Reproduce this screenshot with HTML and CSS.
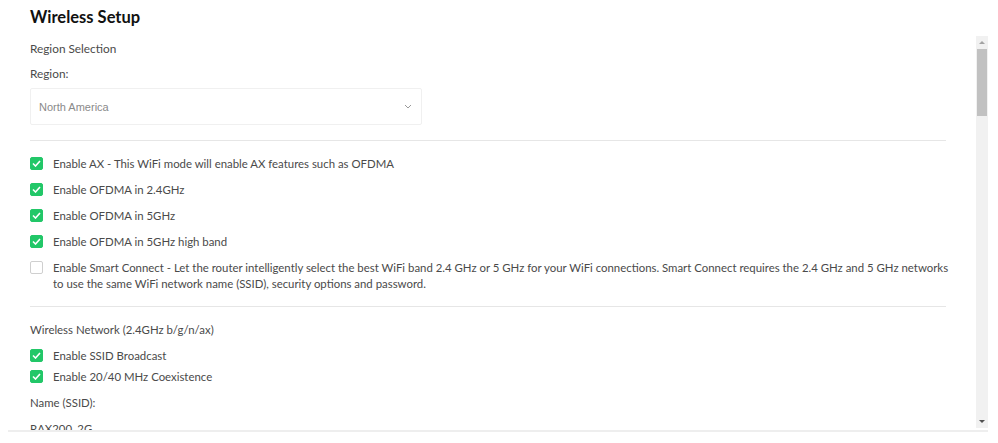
FILE: index.html
```html
<!DOCTYPE html>
<html lang="en">
<head>
<meta charset="utf-8">
<title>Wireless Setup</title>
<link rel="stylesheet" href="styles.css">
</head>
<body>
<div class="page">
  <h1 class="title">Wireless Setup</h1>
  <div class="frame">
    <div class="content">
      <div class="label first">Region Selection</div>
      <div class="label region">Region:</div>
      <div class="select">
        <span>North America</span>
        <svg class="chev" width="8" height="5" viewBox="0 0 8 5"><path d="M1 1 L4 4 L7 1" fill="none" stroke="#9a9a9a" stroke-width="1"/></svg>
      </div>
      <hr class="divider">
      <div class="checks">
        <div class="check"><span class="box on"><svg width="9" height="7" viewBox="0 0 9 7"><path d="M1 3.5 L3.5 6 L8 1" fill="none" stroke="#fff" stroke-width="1.6"/></svg></span><span>Enable AX - This WiFi mode will enable AX features such as OFDMA</span></div>
        <div class="check"><span class="box on"><svg width="9" height="7" viewBox="0 0 9 7"><path d="M1 3.5 L3.5 6 L8 1" fill="none" stroke="#fff" stroke-width="1.6"/></svg></span><span>Enable OFDMA in 2.4GHz</span></div>
        <div class="check"><span class="box on"><svg width="9" height="7" viewBox="0 0 9 7"><path d="M1 3.5 L3.5 6 L8 1" fill="none" stroke="#fff" stroke-width="1.6"/></svg></span><span>Enable OFDMA in 5GHz</span></div>
        <div class="check"><span class="box on"><svg width="9" height="7" viewBox="0 0 9 7"><path d="M1 3.5 L3.5 6 L8 1" fill="none" stroke="#fff" stroke-width="1.6"/></svg></span><span>Enable OFDMA in 5GHz high band</span></div>
        <div class="check"><span class="box"></span><span class="wrap">Enable Smart Connect - Let the router intelligently select the best WiFi band 2.4 GHz or 5 GHz for your WiFi connections. Smart Connect requires the 2.4 GHz and 5 GHz networks to use the same WiFi network name (SSID), security options and password.</span></div>
      </div>
      <hr class="divider second">
      <div class="label net">Wireless Network (2.4GHz b/g/n/ax)</div>
      <div class="checks tight">
        <div class="check"><span class="box on"><svg width="9" height="7" viewBox="0 0 9 7"><path d="M1 3.5 L3.5 6 L8 1" fill="none" stroke="#fff" stroke-width="1.6"/></svg></span><span>Enable SSID Broadcast</span></div>
        <div class="check"><span class="box on"><svg width="9" height="7" viewBox="0 0 9 7"><path d="M1 3.5 L3.5 6 L8 1" fill="none" stroke="#fff" stroke-width="1.6"/></svg></span><span>Enable 20/40 MHz Coexistence</span></div>
      </div>
      <div class="label name">Name (SSID):</div>
      <div class="label ssid">RAX200_2G</div>
    </div>
    <div class="scrollbar">
      <div class="arrow up"></div>
      <div class="thumb"></div>
      <div class="track"></div>
      <div class="arrow down"></div>
    </div>
  </div>
</div>
</body>
</html>
```

FILE: styles.css
```css
* { box-sizing: border-box; }
html, body { margin: 0; padding: 0; background: #fff; }
body {
  font-family: Lato, "Open Sans", sans-serif;
  color: #4a4a4a;
  font-size: 11.4px;
}
.page { width: 998px; height: 443px; overflow: hidden; }
.title {
  margin: 0;
  padding-left: 30px;
  height: 36px;
  line-height: 35px;
  font-size: 16.5px;
  font-weight: 700;
  color: #111;
}
.frame {
  display: flex;
  height: 396px;
  margin-left: 8px;
  width: 980px;
  border-bottom: 2px solid #eeeeee;
  overflow: hidden;
}
.content {
  width: 948px;
  padding-left: 22px;
  overflow: hidden;
}
.label { line-height: 18px; }
.first { margin-top: 4px; font-size: 11.8px; }
.region { margin-top: 7px; font-size: 11.8px; }
.select {
  margin-top: 5px;
  width: 392px;
  height: 37px;
  border: 1px solid #f0f0f0;
  border-radius: 2px;
  display: flex;
  align-items: center;
  justify-content: space-between;
  padding: 0 8px 0 8px;
  font-family: "Liberation Sans", Arial, sans-serif;
  font-size: 11px;
  color: #8a8a8a;
}
.chev { margin-right: 1px; }
.divider {
  margin: 15px 0 0 0;
  width: 916px;
  border: 0;
  border-top: 1px solid #e6e6e6;
  height: 0;
}
.checks { margin-top: 15px; display: flex; flex-direction: column; gap: 10px; }
.check { display: flex; align-items: flex-start; gap: 10px; line-height: 16px; width: 926px; }
.wrap { flex: none; width: 903px; }
.box {
  flex: none;
  width: 13px;
  height: 13px;
  margin-top: 1px;
  border: 1px solid #cfcfcf;
  border-radius: 2px;
  display: flex;
  align-items: center;
  justify-content: center;
}
.box.on { background: #22c768; border-color: #22c768; }
.second { margin-top: 14px; }
.net { margin-top: 14px; }
.checks.tight { margin-top: 9px; gap: 5px; }
.name { margin-top: 9px; }
.ssid { margin-top: 8px; }
.scrollbar {
  margin-left: 20px;
  width: 12px;
  height: 392px;
  background: #f1f1f1;
  display: flex;
  flex-direction: column;
  align-items: center;
}
.arrow { height: 12px; width: 12px; position: relative; }
.arrow.up::after, .arrow.down::after {
  content: "";
  position: absolute;
  left: 3px;
  width: 0; height: 0;
  border-left: 3px solid transparent;
  border-right: 3px solid transparent;
}
.arrow.up::after { top: 5px; border-bottom: 3px solid #a3a3a3; }
.arrow.down::after { top: 4px; border-top: 3px solid #505050; }
.thumb { width: 10px; height: 67px; background: #c1c1c1; margin-top: 1px; }
.track { flex: 1; }
```
